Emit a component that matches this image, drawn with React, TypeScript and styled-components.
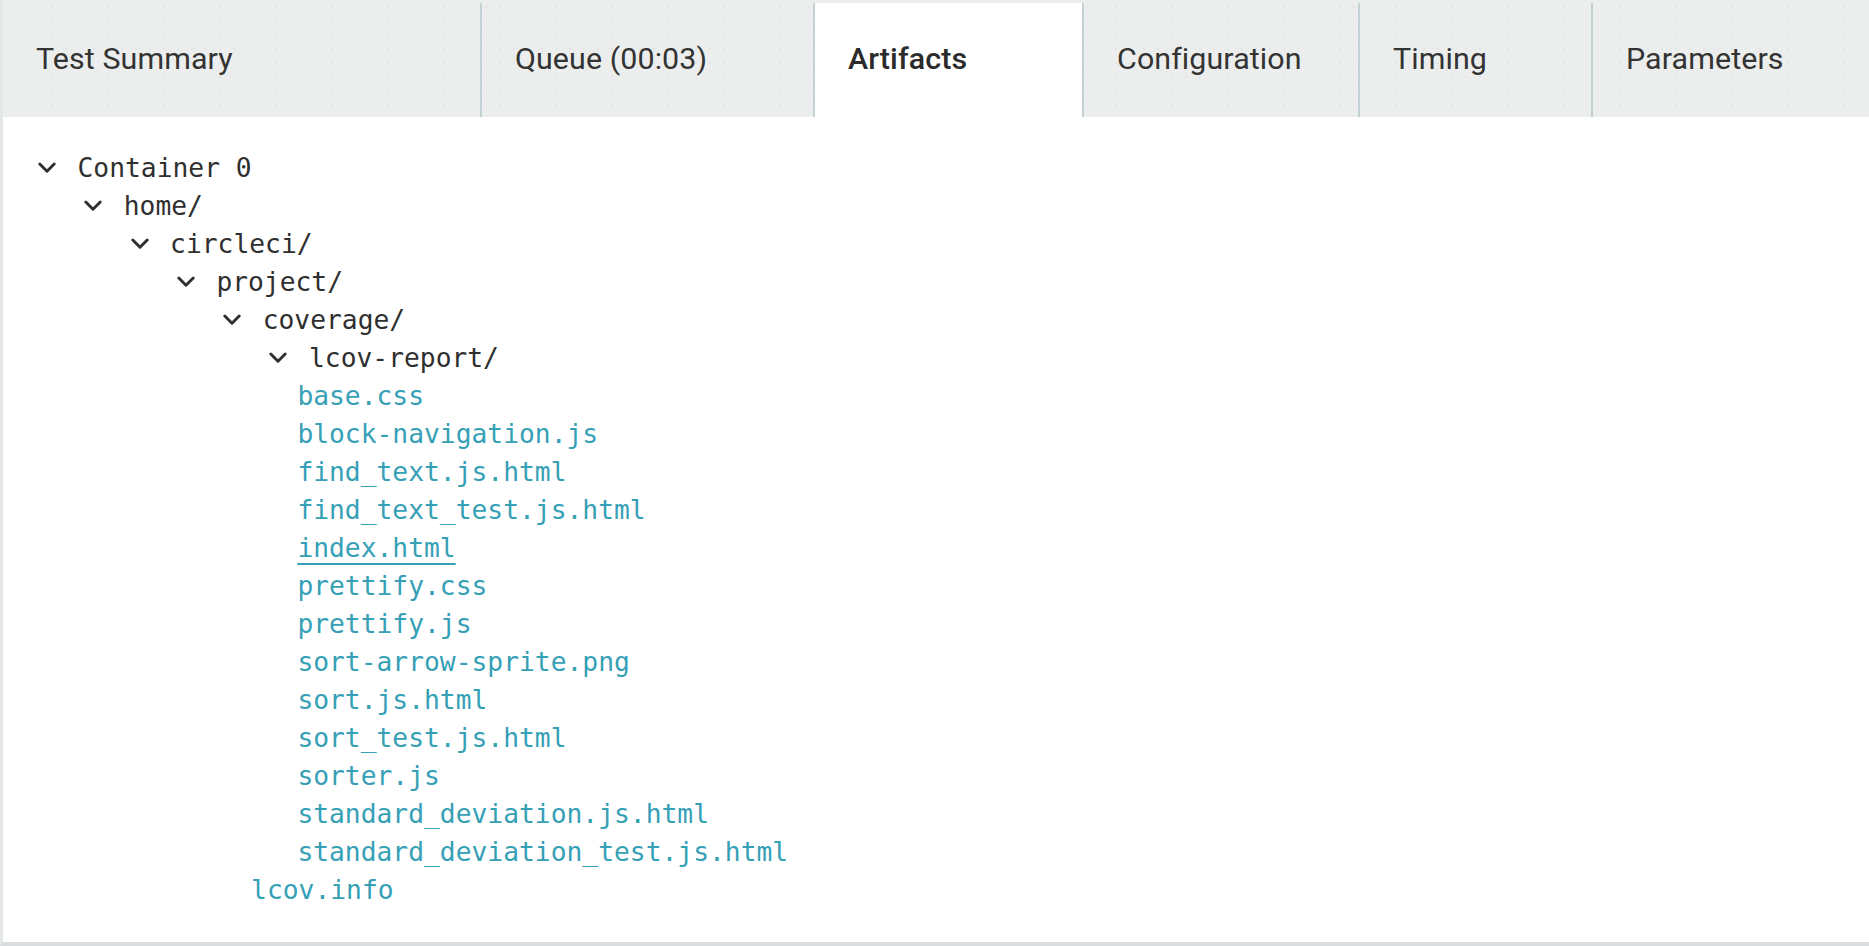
import React from "react";
import styled, { createGlobalStyle } from "styled-components";

const GlobalStyle = createGlobalStyle`
  html, body {
    margin: 0;
    padding: 0;
    background: #ffffff;
  }
  * { box-sizing: border-box; }
`;

const Panel = styled.div`
  width: 1869px;
  height: 946px;
  border-left: 3px solid #e4e7e7;
  border-bottom: 4px solid #dadddf;
  background: #ffffff;
  display: flex;
  flex-direction: column;
  overflow: hidden;
`;

const TabBar = styled.nav`
  display: flex;
  height: 117px;
  padding-top: 3px;
  background-color: #eceeed;
  background-image: radial-gradient(#e2e5e4 0.8px, transparent 1px);
  background-size: 14px 14px;
  flex-shrink: 0;
`;

const Tab = styled.div<{ $width?: number; $active?: boolean; $last?: boolean }>`
  flex: ${(p) => (p.$width ? `0 0 ${p.$width}px` : "1 1 auto")};
  display: flex;
  align-items: center;
  padding-left: 33px;
  padding-bottom: 3px;
  border-right: ${(p) => (p.$last ? "none" : "2px solid #c2d1d4")};
  background: ${(p) => (p.$active ? "#ffffff" : "transparent")};
  font-family: Roboto, "Noto Sans", sans-serif;
  font-size: 30.4px;
  font-weight: ${(p) => (p.$active ? 500 : 400)};
  color: ${(p) => (p.$active ? "#2b2b2b" : "#333333")};
  letter-spacing: 0.1px;
  white-space: nowrap;
`;

const Tree = styled.div`
  padding: 32px 0 0 16.6px;
  font-family: "DejaVu Sans Mono", "Liberation Mono", monospace;
  font-size: 26.3px;
`;

const Children = styled.ul`
  list-style: none;
  margin: 0;
  padding: 0 0 0 46.3px;
`;

const RootList = styled.ul`
  list-style: none;
  margin: 0;
  padding: 0;
`;

const Item = styled.li``;

const DirRow = styled.div`
  display: flex;
  align-items: center;
  height: 38px;
  padding-left: 18.4px;
  color: #2f2f2f;
`;

const ChevronBox = styled.span`
  display: inline-flex;
  width: 18px;
  margin-right: 21.5px;
  align-items: center;
`;

const FileLink = styled.a<{ $hover?: boolean }>`
  display: flex;
  align-items: center;
  height: 38px;
  color: #35a0b6;
  text-decoration: ${(p) => (p.$hover ? "underline" : "none")};
  text-decoration-thickness: 2px;
  text-underline-offset: 6px;
  width: fit-content;
`;

const Chevron = () => (
  <svg width="18" height="12" viewBox="0 0 18 12">
    <polyline
      points="1.8,2 9,9.2 16.2,2"
      fill="none"
      stroke="#2f2f2f"
      strokeWidth="2.9"
      strokeLinecap="round"
      strokeLinejoin="round"
    />
  </svg>
);

type Node = { name: string; children?: Node[]; hover?: boolean };

const tree: Node[] = [
  {
    name: "Container 0",
    children: [
      {
        name: "home/",
        children: [
          {
            name: "circleci/",
            children: [
              {
                name: "project/",
                children: [
                  {
                    name: "coverage/",
                    children: [
                      {
                        name: "lcov-report/",
                        children: [
                          { name: "base.css" },
                          { name: "block-navigation.js" },
                          { name: "find_text.js.html" },
                          { name: "find_text_test.js.html" },
                          { name: "index.html", hover: true },
                          { name: "prettify.css" },
                          { name: "prettify.js" },
                          { name: "sort-arrow-sprite.png" },
                          { name: "sort.js.html" },
                          { name: "sort_test.js.html" },
                          { name: "sorter.js" },
                          { name: "standard_deviation.js.html" },
                          { name: "standard_deviation_test.js.html" },
                        ],
                      },
                      { name: "lcov.info" },
                    ],
                  },
                ],
              },
            ],
          },
        ],
      },
    ],
  },
];

const TreeNode: React.FC<{ node: Node }> = ({ node }) => {
  if (node.children) {
    return (
      <Item>
        <DirRow>
          <ChevronBox>
            <Chevron />
          </ChevronBox>
          {node.name}
        </DirRow>
        <Children>
          {node.children.map((c) => (
            <TreeNode key={c.name} node={c} />
          ))}
        </Children>
      </Item>
    );
  }
  return (
    <Item>
      <FileLink href="#" $hover={node.hover}>
        {node.name}
      </FileLink>
    </Item>
  );
};

const tabs = [
  { label: "Test Summary", width: 479 },
  { label: "Queue (00:03)", width: 333 },
  { label: "Artifacts", width: 269, active: true },
  { label: "Configuration", width: 276 },
  { label: "Timing", width: 233 },
  { label: "Parameters", last: true },
];

export default function App() {
  return (
    <>
      <GlobalStyle />
      <Panel>
        <TabBar>
          {tabs.map((t) => (
            <Tab key={t.label} $width={t.width} $active={t.active} $last={t.last}>
              {t.label}
            </Tab>
          ))}
        </TabBar>
        <Tree>
          <RootList>
            {tree.map((n) => (
              <TreeNode key={n.name} node={n} />
            ))}
          </RootList>
        </Tree>
      </Panel>
    </>
  );
}
